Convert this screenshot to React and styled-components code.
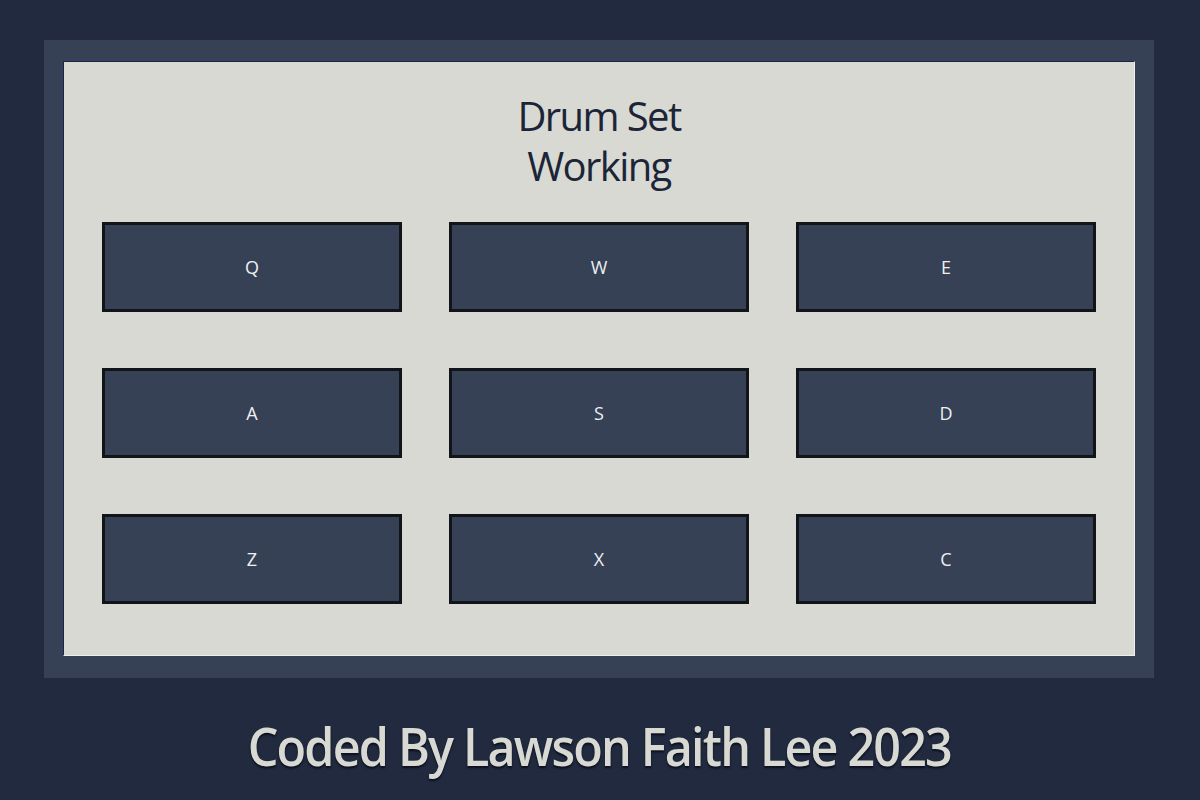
import React from 'react';
import styled, { createGlobalStyle } from 'styled-components';

const GlobalStyle = createGlobalStyle`
    html, body {
        margin: 0;
        padding: 0;
        background: #212a3e;
        font-family: 'Open Sans', 'Noto Sans', sans-serif;
    }
`;

const Page = styled.div`
    width: 1200px;
    height: 800px;
    display: flex;
    flex-direction: column;
    align-items: center;
    padding: 40px 2px 0 0;
    box-sizing: border-box;
`;

const DrumMachine = styled.div`
    width: 1110px;
    background: #364155;
    padding: 21px 19px 22px 19px;
    box-sizing: border-box;
`;

const Display = styled.div`
    background: #d9d9d3;
    border: 1px solid;
    border-top-color: #1a2550;
    border-left-color: #1a2550;
    border-right-color: #f0f0ea;
    border-bottom-color: #f0f0ea;
    padding: 29px 0 51px;
    display: flex;
    flex-direction: column;
    align-items: center;
`;

const Title = styled.h1`
    margin: 0 0 31px;
    font-size: 40px;
    font-weight: 400;
    color: #1c2538;
    text-align: center;
    letter-spacing: -1.6px;
`;

const TitleLine = styled.span`
    display: block;
    height: 50px;
    line-height: 50px;
`;

const PadGrid = styled.div`
    display: grid;
    grid-template-columns: repeat(3, 300px);
    column-gap: 47px;
    row-gap: 56px;
`;

const Pad = styled.button`
    height: 90px;
    background: #364155;
    border: 3px solid #111418;
    color: #eef0f2;
    font-family: 'Open Sans', sans-serif;
    font-size: 18px;
    font-weight: 400;
    cursor: pointer;
    box-sizing: border-box;
`;

const Footer = styled.footer`
    margin-top: 33px;
    font-size: 53px;
    font-weight: 600;
    line-height: 70px;
    color: #d9d9d3;
    letter-spacing: -2px;
    white-space: nowrap;
    transform: scaleX(0.915);
    text-shadow: 0 2px 2px #0b1020;
`;

const keys = ['Q', 'W', 'E', 'A', 'S', 'D', 'Z', 'X', 'C'];

const App = () => (
    <>
        <GlobalStyle />
        <Page>
            <DrumMachine>
                <Display>
                    <Title>
                        <TitleLine>Drum Set</TitleLine>
                        <TitleLine>Working</TitleLine>
                    </Title>
                    <PadGrid>
                        {keys.map(key => (
                            <Pad key={key}>{key}</Pad>
                        ))}
                    </PadGrid>
                </Display>
            </DrumMachine>
            <Footer>Coded By Lawson Faith Lee 2023</Footer>
        </Page>
    </>
);

export default App;
